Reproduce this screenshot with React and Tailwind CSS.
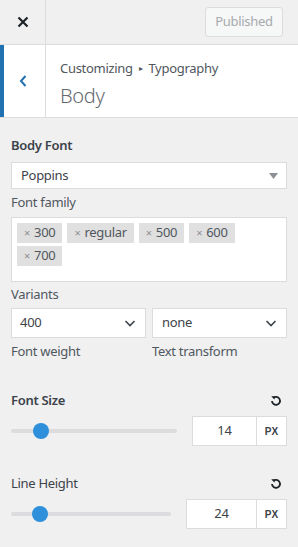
import { useState } from "react";

const font = { fontFamily: '"Noto Sans", "Open Sans", Arial, sans-serif' };

function Chevron() {
  return (
    <svg width="14" height="14" viewBox="0 0 14 14" fill="none">
      <path d="M2.5 5l4.5 4.5L11.5 5" stroke="#3c434a" strokeWidth="1.6" />
    </svg>
  );
}

function ResetIcon() {
  return (
    <svg width="12" height="12" viewBox="0 0 12 12" fill="none">
      <path d="M3.2 3A4 4 0 1 1 2 6" stroke="#1d2327" strokeWidth="1.8" />
      <path d="M1.2 1.2h3.4v3.4z" fill="#1d2327" />
    </svg>
  );
}

function SizeControl({ label, bold, value, trackW, thumbX, inputW }) {
  return (
    <div className="px-[11px]">
      <div className="flex h-5 items-center justify-between">
        <span className={`text-[13px] text-[#3c434a] ${bold ? "font-semibold" : ""}`}>{label}</span>
        <span className="mr-[5px]">
          <ResetIcon />
        </span>
      </div>
      <div className="mt-[5px] flex items-center justify-between">
        <div className="relative h-[4px] rounded bg-[#dcdcde]" style={{ width: trackW }}>
          <div
            className="absolute top-1/2 h-[16px] w-[16px] -translate-y-1/2 rounded-full bg-[#2e8fdb]"
            style={{ left: thumbX - 8 }}
          />
        </div>
        <div className="flex h-[30px] border border-[#dcdcde] bg-white">
          <div className="flex items-center justify-center text-[13px] text-[#3c434a]" style={{ width: inputW }}>
            {value}
          </div>
          <div
            className="flex w-[30px] items-center justify-center border-l border-[#dcdcde] text-[10px] font-bold tracking-normal text-[#3c434a]"
            style={{ fontFamily: "Arial, sans-serif" }}
          >
            PX
          </div>
        </div>
      </div>
    </div>
  );
}

export default function App() {
  const [tags] = useState(["300", "regular", "500", "600", "700"]);

  return (
    <div className="h-[547px] w-[298px] overflow-hidden bg-[#f0f0f1] tracking-[-0.3px]" style={font}>
      <div className="flex h-[45px] border-b border-[#dcdcde]">
        <div className="flex w-[46px] items-center justify-center border-r border-[#dcdcde]">
          <svg width="12" height="12" viewBox="0 0 12 12">
            <path d="M1.5 1.5l9 9M10.5 1.5l-9 9" stroke="#1d2327" strokeWidth="2.2" />
          </svg>
        </div>
        <div className="flex flex-1 items-center justify-end pr-[15px]">
          <div className="flex h-[30px] w-[78px] items-center justify-center rounded-[3px] border border-[#dcdcde] bg-[#f6f7f7] text-[13px] text-[#a7aaad]">
            Published
          </div>
        </div>
      </div>

      <div className="flex h-[73px] border-b border-[#dcdcde] bg-white">
        <div className="flex w-[46px] items-center justify-center border-l-4 border-r border-l-[#2271b1] border-r-[#dcdcde] pr-[4px]">
          <svg width="10" height="14" viewBox="0 0 10 14">
            <path d="M7.5 2L3 7l4.5 5" stroke="#2271b1" strokeWidth="2" fill="none" />
          </svg>
        </div>
        <div className="flex flex-col pl-[14px] pt-[14px]">
          <div className="flex items-center text-[13px] leading-[18px] text-[#50575e]">
            Customizing
            <span className="mx-[6px] text-[8px]">▸</span>
            Typography
          </div>
          <div className="mt-[5px] text-[20px] font-light leading-[28px] text-[#646970]">Body</div>
        </div>
      </div>

      <div className="px-[11px] pt-[17px]">
        <div className="text-[13px] font-semibold leading-5 text-[#3c434a]">Body Font</div>
        <div className="mt-[7px] flex h-[27px] items-center justify-between border border-[#dcdcde] bg-white pl-[9px] pr-[8px] text-[13px] text-[#3c434a]">
          Poppins
          <svg width="9" height="6" viewBox="0 0 9 6">
            <path d="M0 0h9L4.5 6z" fill="#8c8f94" />
          </svg>
        </div>
        <div className="mt-[3px] text-[13px] leading-5 text-[#50575e]">Font family</div>
        <div className="mt-[5px] flex h-[65px] flex-wrap content-start gap-x-[5px] gap-y-[3px] border border-[#dcdcde] bg-white pl-[5px] pr-[30px] pt-[5px]">
          {tags.map((t) => (
            <span key={t} className="flex h-[20px] items-center bg-[#e0e0e0] px-[7px] text-[13px] text-[#50575e]">
              <span className="mr-[4px] text-[11px] text-[#8c8f94]">×</span>
              {t}
            </span>
          ))}
        </div>
        <div className="mt-[2px] text-[13px] leading-5 text-[#50575e]">Variants</div>
        <div className="mt-[4px] flex gap-[6px]">
          <div className="flex-1">
            <div className="flex h-[30px] items-center justify-between border border-[#dcdcde] bg-white px-[8px] text-[13px] text-[#3c434a]">
              400
              <Chevron />
            </div>
            <div className="mt-[3px] text-[13px] leading-5 text-[#50575e]">Font weight</div>
          </div>
          <div className="flex-1">
            <div className="flex h-[30px] items-center justify-between border border-[#dcdcde] bg-white pl-[9px] pr-[8px] text-[13px] text-[#3c434a]">
              none
              <Chevron />
            </div>
            <div className="mt-[3px] text-[13px] leading-5 text-[#50575e]">Text transform</div>
          </div>
        </div>
      </div>

      <div className="mt-[30px]">
        <SizeControl label="Font Size" bold value="14" trackW={166} thumbX={30} inputW={63} />
      </div>
      <div className="mt-[28px]">
        <SizeControl label="Line Height" value="24" trackW={160} thumbX={29} inputW={69} />
      </div>
    </div>
  );
}
